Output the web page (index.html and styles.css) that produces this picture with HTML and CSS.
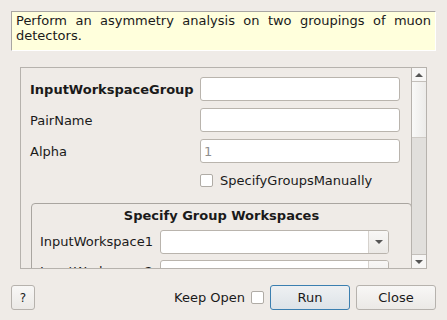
FILE: index.html
```html
<!DOCTYPE html>
<html>
<head>
    <title>AsymmetryCalc</title>
    <link rel="stylesheet" href="styles.css">
</head>
<body>
    <div class="description">Perform an asymmetry analysis on two groupings of muon detectors.</div>

    <div class="scroll-area">
        <div class="content">
            <div class="prop-row">
                <label class="prop-label bold">InputWorkspaceGroup</label>
                <input class="text-input" type="text">
            </div>
            <div class="prop-row">
                <label class="prop-label">PairName</label>
                <input class="text-input" type="text">
            </div>
            <div class="prop-row">
                <label class="prop-label">Alpha</label>
                <input class="text-input" type="text" placeholder="1">
            </div>
            <div class="check-row">
                <span class="checkbox"></span>
                <span>SpecifyGroupsManually</span>
            </div>

            <div class="group-box">
                <div class="group-title">Specify Group Workspaces</div>
                <div class="combo-row">
                    <label class="combo-label">InputWorkspace1</label>
                    <div class="combo">
                        <span class="combo-text"></span>
                        <span class="combo-button"><span class="arrow-down"></span></span>
                    </div>
                </div>
                <div class="combo-row">
                    <label class="combo-label">InputWorkspace2</label>
                    <div class="combo">
                        <span class="combo-text"></span>
                        <span class="combo-button"><span class="arrow-down"></span></span>
                    </div>
                </div>
            </div>
        </div>
        <div class="scrollbar">
            <div class="sb-button"><span class="arrow-up"></span></div>
            <div class="sb-thumb"></div>
            <div class="sb-trough"></div>
            <div class="sb-button"><span class="arrow-down"></span></div>
        </div>
    </div>

    <div class="footer">
        <button class="btn help">?</button>
        <span class="spacer"></span>
        <span class="keep-open">Keep Open</span>
        <span class="checkbox"></span>
        <button class="btn run">Run</button>
        <button class="btn">Close</button>
    </div>
</body>
</html>
```

FILE: styles.css
```css
body {
    margin: 0;
    width: 447px;
    height: 320px;
    overflow: hidden;
    background-color: #efebe7;
    font-family: "DejaVu Sans", sans-serif;
    font-size: 13px;
    color: #1a1a1a;
}

.description {
    margin: 11px 11px 0 11px;
    height: 37px;
    padding: 1px 4px 0 4px;
    background-color: #ffffdc;
    border-top: 1px solid #a8a6a2;
    border-left: 1px solid #a8a6a2;
    border-right: 1px solid #ffffff;
    border-bottom: 1px solid #ffffff;
    text-align: justify;
    line-height: 15px;
}

.scroll-area {
    display: flex;
    margin: 16px 0 0 20px;
    width: 405px;
    height: 200px;
    border: 1px solid #b6b2ad;
    overflow: hidden;
}

.content {
    flex: 1;
    padding: 9px 0 0 9px;
    overflow: hidden;
}

.prop-row {
    display: flex;
    align-items: center;
    height: 24px;
    margin-bottom: 7px;
}

.prop-label {
    width: 170px;
}

.bold {
    font-weight: bold;
}

.text-input {
    box-sizing: border-box;
    width: 200px;
    height: 24px;
    margin: 0;
    padding: 0 3px;
    border: 1px solid #b9b4ad;
    border-radius: 3px;
    background-color: #fff;
    font-family: "DejaVu Sans", sans-serif;
    font-size: 13px;
}

.text-input::placeholder {
    color: #8e8e8e;
}

.check-row {
    display: flex;
    align-items: center;
    gap: 7px;
    margin: 11px 0 0 170px;
    height: 13px;
}

.checkbox {
    display: inline-block;
    box-sizing: border-box;
    width: 13px;
    height: 13px;
    border: 1px solid #b0aca6;
    border-radius: 2px;
    background-color: #fff;
}

.group-box {
    box-sizing: border-box;
    width: 381px;
    height: 120px;
    margin: 16px 0 0 1px;
    padding: 4px 0 0 0;
    border: 1px solid #a9a5a0;
    border-radius: 4px;
}

.group-title {
    font-weight: bold;
    text-align: center;
    line-height: 15px;
    margin-bottom: 7px;
}

.combo-row {
    display: flex;
    align-items: center;
    height: 23px;
    margin-bottom: 7px;
    padding-left: 8px;
}

.combo-label {
    width: 120px;
}

.combo {
    display: flex;
    box-sizing: border-box;
    width: 229px;
    height: 24px;
    border: 1px solid #b9b4ad;
    border-radius: 3px;
    background-color: #fff;
    overflow: hidden;
}

.combo-text {
    flex: 1;
}

.combo-button {
    display: flex;
    align-items: center;
    justify-content: center;
    width: 19px;
    border-left: 1px solid #d6d2cd;
    background: linear-gradient(#f8f7f6, #ebe9e6);
}

.arrow-down {
    width: 0;
    height: 0;
    border-left: 4px solid transparent;
    border-right: 4px solid transparent;
    border-top: 4px solid #555;
}

.arrow-up {
    width: 0;
    height: 0;
    border-left: 4px solid transparent;
    border-right: 4px solid transparent;
    border-bottom: 4px solid #555;
}

.scrollbar {
    display: flex;
    flex-direction: column;
    width: 14px;
    border-left: 1px solid #b6b2ad;
    background-color: #e1dfdc;
}

.sb-button {
    display: flex;
    align-items: center;
    justify-content: center;
    height: 13px;
    background-color: #f7f6f5;
    border-bottom: 1px solid #c3bfba;
}

.sb-button:last-child {
    border-bottom: none;
    border-top: 1px solid #c3bfba;
}

.sb-thumb {
    height: 55px;
    background: linear-gradient(to right, #f9f9f8, #ecebe9);
    border-bottom: 1px solid #cfcbc6;
}

.sb-trough {
    flex: 1;
}

.footer {
    display: flex;
    align-items: center;
    margin-top: 16px;
    padding: 0 11px;
    gap: 6px;
}

.spacer {
    flex: 1;
}

.btn {
    box-sizing: border-box;
    width: 80px;
    height: 25px;
    border: 1px solid #b6b2ad;
    border-radius: 3px;
    background: linear-gradient(#f8f7f6, #ebe9e6);
    font-family: "DejaVu Sans", sans-serif;
    font-size: 13px;
    color: #1a1a1a;
    padding: 0;
}

.btn.help {
    width: 24px;
    font-size: 12px;
}

.btn.run {
    border-color: #3b7fb0;
    background: linear-gradient(#eef0f2, #dde3e8);
}
```
